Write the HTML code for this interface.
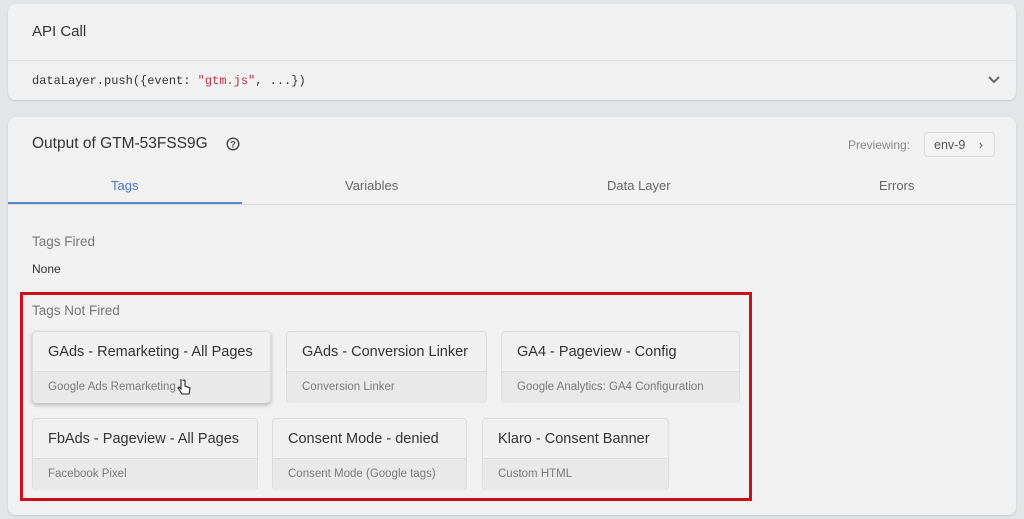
<!DOCTYPE html>
<html><head><style>
*{box-sizing:border-box;margin:0;padding:0}
body{width:1024px;height:519px;background:#e4e5e6;font-family:"Liberation Sans",sans-serif;position:relative;overflow:hidden;color:#333}
.card{position:absolute;left:8px;width:1008px;background:#f1f1f1;border-radius:8px;box-shadow:0 1px 2px rgba(0,0,0,.12)}
.abs{position:absolute}
.tag{position:absolute;background:#f0f0f0;border:1px solid #dcdcdc;border-radius:4px;height:72px}
.tag .t{height:40px;border-bottom:1px solid #dcdcdc;padding:12px 0 0 15px;font-size:14.5px;color:#333;white-space:nowrap}
.tag .s{height:31px;background:#e9e9e9;padding:9px 0 0 15px;font-size:11.5px;color:#7a7a7a;white-space:nowrap;border-radius:0 0 4px 4px}
.tab{position:absolute;top:178px;font-size:13px;color:#666}
</style></head><body>
<div class="card" style="top:4px;height:96px">
 <div class="abs" style="left:24px;top:19px;font-size:15px;color:#333">API Call</div>
 <div class="abs" style="left:0;top:56px;width:1008px;height:1px;background:#dedede"></div>
 <div class="abs" style="left:24px;top:70px;font-family:'Liberation Mono',monospace;font-size:12px;color:#333">dataLayer.push({event: <span style="color:#b0334a">"gtm.js"</span>, ...})</div>
 <svg class="abs" style="left:979px;top:71px" width="14" height="10"><path d="M2 2l5 5 5-5" stroke="#666" stroke-width="2" fill="none"/></svg>
</div>
<div class="card" style="top:117px;height:398px">
 <div class="abs" style="left:24px;top:18px;font-size:15.5px;color:#333">Output of GTM-53FSS9G</div>
 <svg class="abs" style="left:218px;top:20px" width="14" height="14"><circle cx="7" cy="7" r="5.8" stroke="#444" stroke-width="1.4" fill="none"/><text x="7" y="10.5" font-size="9" font-weight="bold" text-anchor="middle" fill="#444" font-family="Liberation Sans">?</text></svg>
 <div class="abs" style="left:840px;top:21px;font-size:12px;color:#888">Previewing:</div>
 <div class="abs" style="left:916px;top:15px;width:71px;height:25px;border:1px solid #dadada;border-radius:4px;background:#f3f3f3;font-size:12.5px;color:#555;padding:5px 0 0 9px">env-9 <span style="margin-left:10px">›</span></div>
</div>
<div class="tab" style="left:111px;color:#4a78c2">Tags</div>
<div class="tab" style="left:345px">Variables</div>
<div class="tab" style="left:607px">Data Layer</div>
<div class="tab" style="left:879px">Errors</div>
<div class="abs" style="left:8px;top:204px;width:1008px;height:1px;background:#dcdcdc"></div>
<div class="abs" style="left:8px;top:202px;width:234px;height:2px;background:#5b86c8"></div>
<div class="abs" style="left:32px;top:234px;font-size:13.5px;color:#777">Tags Fired</div>
<div class="abs" style="left:32px;top:262px;font-size:12px;color:#333">None</div>
<div class="abs" style="left:20px;top:292px;width:732px;height:209px;border:3px solid #c8101a"></div>
<div class="abs" style="left:32px;top:303px;font-size:13.5px;color:#777">Tags Not Fired</div>
<div class="tag" style="left:32px;top:331px;width:239px;box-shadow:0 2px 4px rgba(0,0,0,.25)"><div class="t">GAds - Remarketing - All Pages</div><div class="s">Google Ads Remarketing</div></div>
<div class="tag" style="left:286px;top:331px;width:201px"><div class="t">GAds - Conversion Linker</div><div class="s">Conversion Linker</div></div>
<div class="tag" style="left:501px;top:331px;width:239px"><div class="t">GA4 - Pageview - Config</div><div class="s">Google Analytics: GA4 Configuration</div></div>
<div class="tag" style="left:32px;top:418px;width:226px"><div class="t">FbAds - Pageview - All Pages</div><div class="s">Facebook Pixel</div></div>
<div class="tag" style="left:272px;top:418px;width:195px"><div class="t">Consent Mode - denied</div><div class="s">Consent Mode (Google tags)</div></div>
<div class="tag" style="left:482px;top:418px;width:187px"><div class="t">Klaro - Consent Banner</div><div class="s">Custom HTML</div></div>
<svg class="abs" style="left:176px;top:377px" width="16" height="20"><path d="M5 2v10l-2-2-1 1 4 6h7l1-6-5-2V4a1 1 0 0 0-2 0" fill="#fff" stroke="#222" stroke-width="1.1"/></svg>
</body></html>
